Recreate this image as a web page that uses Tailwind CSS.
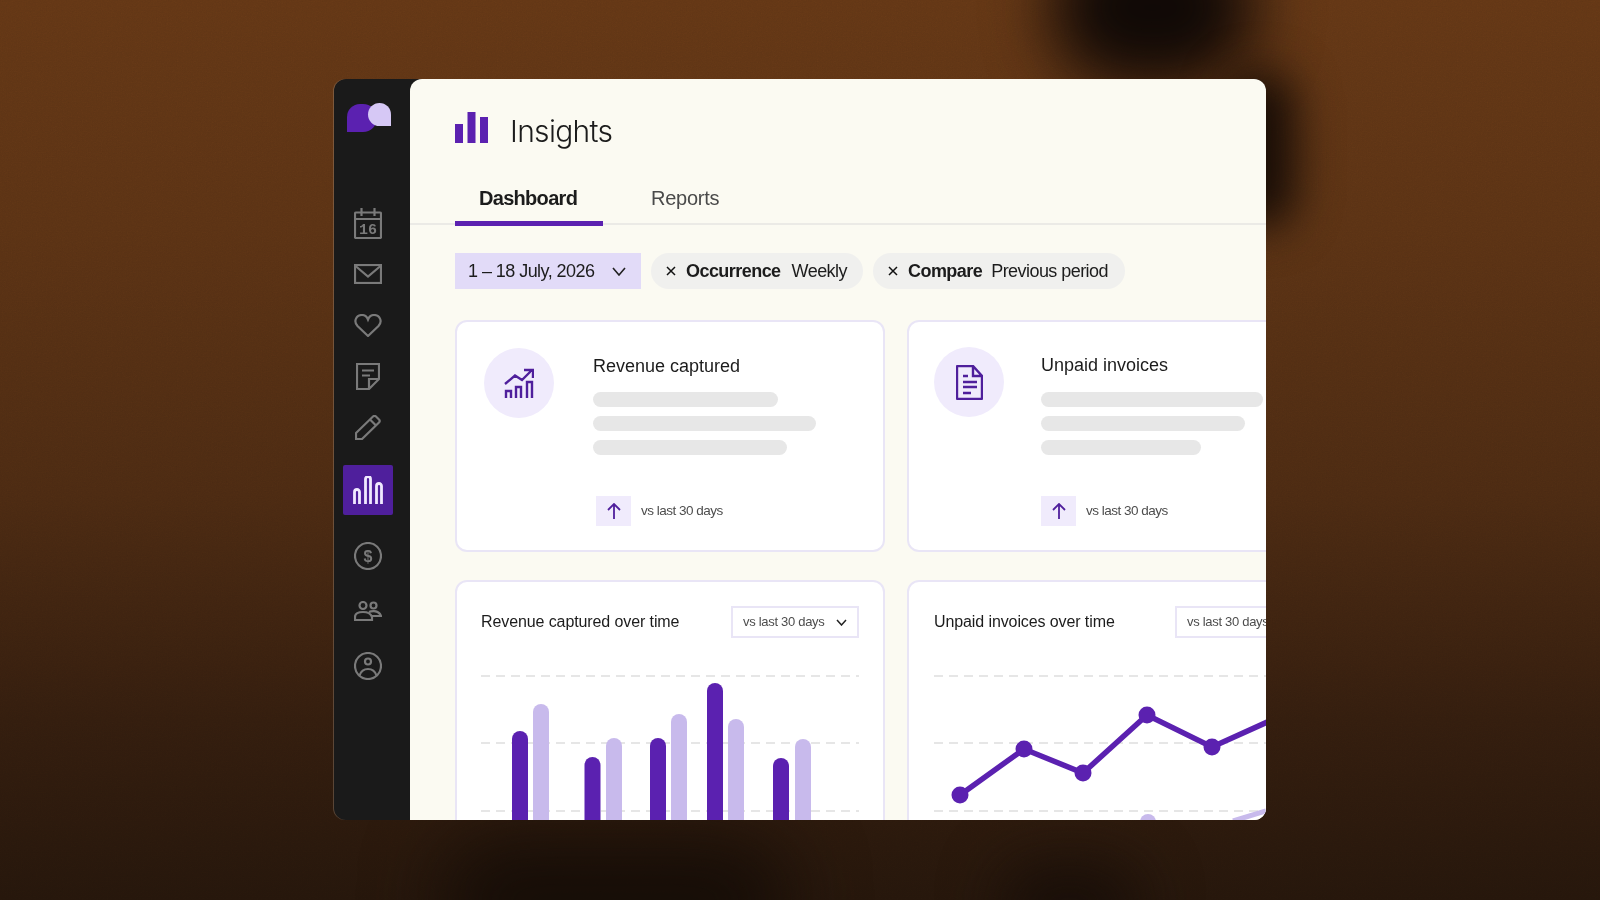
<!DOCTYPE html>
<html lang="en">
<head>
  <meta charset="UTF-8" />
  <title>Insights</title>
  <script src="https://cdn.jsdelivr.net/npm/@tailwindcss/browser@4"></script>
</head>
<body class="font-['Liberation_Sans',Arial,sans-serif] bg-[#5e3716] overflow-hidden">
<div class="relative w-[1600px] h-[900px] overflow-hidden pl-[334px] pt-[79px] bg-[linear-gradient(180deg,#623615_0%,#5a3214_25%,#4b2a12_55%,#331d0e_80%,#25160b_100%)]">

  <!-- blurred backdrop shapes -->
  <div class="absolute left-[1050px] top-[-70px] w-[205px] h-[155px] rounded-full bg-[#0f0805] blur-[32px]"></div>
  <div class="absolute left-[1225px] top-[70px] w-[70px] h-[160px] rounded-full bg-[#150b05] blur-[22px]"></div>
  <div class="absolute left-[440px] top-[840px] w-[350px] h-[120px] rounded-full bg-[#150c06] blur-[38px]"></div>
  <div class="absolute left-[1000px] top-[865px] w-[140px] h-[80px] rounded-full bg-[#170d07] blur-[30px]"></div>

  <!-- grain -->
  <svg class="absolute inset-0 opacity-[0.14] mix-blend-overlay" width="1600" height="900">
    <filter id="grain"><feTurbulence type="fractalNoise" baseFrequency="0.8" numOctaves="2"/><feColorMatrix type="saturate" values="0"/></filter>
    <rect width="1600" height="900" filter="url(#grain)"/>
  </svg>

  <div class="relative flex w-[932px] h-[741px] rounded-[12px] overflow-hidden bg-[#1a1a1a] shadow-[-1px_0_0_0_rgba(190,170,150,0.3)]">

    <!-- sidebar -->
    <aside class="w-[76px] shrink-0 flex flex-col items-center pr-[8px] text-[#7a7a7a]">
      <svg class="mt-[24px] ml-[1px] w-[44px] h-[30px] shrink-0" viewBox="0 0 44 30">
        <path d="M0 29V14A13 13 0 0 1 13 1H16A14 14 0 0 1 30 15A14 14 0 0 1 16 29Z" fill="#5b21b0"/>
        <path d="M21 11.500A11.500 11.500 0 0 1 44 11.500V23H32.500A11.500 11.500 0 0 1 21 11.500Z" fill="#d6c8f5"/>
      </svg>

      <svg class="mt-[75px] w-[28px] h-[31px] shrink-0" viewBox="0 0 28 31" fill="none" stroke="currentColor" stroke-width="2.200">
        <rect x="1" y="4.500" width="26" height="25.500" rx="1"/><path d="M1 11H27M7.500 0V8M20.500 0V8"/>
        <text x="14" y="26" text-anchor="middle" font-family="Liberation Mono" font-weight="700" font-size="15" fill="currentColor" stroke="none">16</text>
      </svg>
      <svg class="mt-[25px] w-[28px] h-[20px] shrink-0" viewBox="0 0 28 20" fill="none" stroke="currentColor" stroke-width="2.200">
        <rect x="1" y="1" width="26" height="18"/><path d="M1.500 2L14 12.500L26.500 2"/>
      </svg>
      <svg class="mt-[30px] w-[28px] h-[23px] shrink-0" viewBox="0 0 28 23" fill="none" stroke="currentColor" stroke-width="2.200">
        <path d="M14 22L3.500 12C-1 7 2.500 1 8 1C11 1 13 3 14 5.500C15 3 17 1 20 1C25.500 1 29 7 24.500 12Z"/>
      </svg>
      <svg class="mt-[26px] w-[24px] h-[27px] shrink-0" viewBox="0 0 24 27" fill="none" stroke="currentColor" stroke-width="2.200">
        <path d="M1 26V1H23V16L13 26ZM13 26V16H23M6 7.500H18M6 12.500H14"/>
      </svg>
      <svg class="mt-[25px] w-[26px] h-[25px] shrink-0" viewBox="0 0 26 25" fill="none" stroke="currentColor" stroke-width="2.200">
        <path d="M1 24V18L18 1.500C19 0.700 20 0.700 21 1.500L24 4.500C25 5.500 25 6.500 24 7.500L7 24ZM15 4.500L21 10.500"/>
      </svg>
      <div class="mt-[25px] w-[50px] h-[50px] shrink-0 rounded-[2px] bg-[#4f1f9c] flex items-center justify-center">
        <svg class="w-[30px] h-[28px]" viewBox="0 0 30 28" fill="none" stroke="#f0e9ff" stroke-width="2.800">
          <path d="M1.500 28V16A2.500 2.500 0 0 1 6.500 16V28M12.500 28V3A2.500 2.500 0 0 1 17.500 3V28M23.500 28V10A2.500 2.500 0 0 1 28.500 10V28"/>
        </svg>
      </div>
      <svg class="mt-[27px] w-[28px] h-[28px] shrink-0" viewBox="0 0 28 28" fill="none" stroke="currentColor" stroke-width="2.200">
        <circle cx="14" cy="14" r="13"/>
        <text x="14" y="20" text-anchor="middle" font-family="Liberation Sans" font-weight="700" font-size="16" fill="currentColor" stroke="none">$</text>
      </svg>
      <svg class="mt-[31px] w-[28px] h-[20px] shrink-0" viewBox="0 0 28 20" fill="none" stroke="currentColor" stroke-width="2.200">
        <circle cx="9" cy="4.500" r="3.500"/><circle cx="19.500" cy="4.500" r="3"/>
        <path d="M1 19V16C1 13 4 11 9 11C14 11 17 13 18 16V19ZM15 11C17 10 23 9 26 13L27 15H18"/>
      </svg>
      <svg class="mt-[31px] w-[28px] h-[28px] shrink-0" viewBox="0 0 28 28" fill="none" stroke="currentColor" stroke-width="2.200">
        <circle cx="14" cy="14" r="13"/><circle cx="14" cy="9.500" r="3"/>
        <path d="M5.500 23.500C7 19 10 17 14 17C18 17 21 19 22.500 23.500"/>
      </svg>
    </aside>

    <!-- main panel -->
    <main class="flex-1 min-w-0 bg-[#fbfaf2] rounded-tl-[12px] overflow-hidden text-[#1c1c1c]">
      <header class="flex items-center gap-[22px] pl-[45px] h-[100px]">
        <svg class="w-[33px] h-[31px] shrink-0 mb-[3px]" viewBox="0 0 33 31" fill="#5b21b0">
          <rect x="0" y="12" width="8" height="19"/><rect x="12.500" y="0" width="8" height="31"/><rect x="25" y="5" width="8" height="26"/>
        </svg>
        <h1 class="font-['Inter',sans-serif] font-light text-[30px] tracking-[-0.7px] mt-[4px]">Insights</h1>
      </header>

      <nav class="flex pl-[45px] h-[46px] border-b-2 border-[#ebeae6]">
        <div class="w-[148px] h-[47px] shrink-0 pl-[24px] pt-[4px] border-b-[5px] border-[#5b21b0] text-[20px] font-bold tracking-[-0.7px]">Dashboard</div>
        <div class="ml-[48px] pt-[4px] text-[20px] text-[#4a4a4a] tracking-[-0.25px]">Reports</div>
      </nav>

      <div class="flex items-center gap-[10px] pl-[45px] mt-[28px] text-[18px] tracking-[-0.55px]">
        <div class="flex items-center w-[186px] h-[36px] pl-[13px] bg-[#e2dbf8]">
          1 – 18 July, 2026
          <svg class="ml-[18px] w-[14px] h-[9px]" viewBox="0 0 14 9" fill="none" stroke="#222" stroke-width="1.600"><path d="M1 1L7 8L13 1"/></svg>
        </div>
        <div class="flex items-center w-[212px] h-[36px] pl-[15px] rounded-full bg-[#f0f0ee]">
          <svg class="w-[10px] h-[10px] mr-[10px]" viewBox="0 0 10 10" stroke="#111" stroke-width="1.500"><path d="M1 1L9 9M9 1L1 9"/></svg>
          <b>Occurrence</b><span class="ml-[11px]">Weekly</span>
        </div>
        <div class="flex items-center w-[252px] h-[36px] pl-[15px] rounded-full bg-[#f0f0ee]">
          <svg class="w-[10px] h-[10px] mr-[10px]" viewBox="0 0 10 10" stroke="#111" stroke-width="1.500"><path d="M1 1L9 9M9 1L1 9"/></svg>
          <b>Compare</b><span class="ml-[9px]">Previous period</span>
        </div>
      </div>

      <div class="grid grid-cols-[430px_430px] gap-x-[22px] gap-y-[28px] pl-[45px] mt-[31px]">
        <!-- stat cards -->
        <section class="h-[232px] rounded-[12px] border-2 border-[#e9e5f6] bg-white flex pl-[27px] pt-[26px]">
          <div class="w-[70px] h-[70px] rounded-full bg-[#f0ebfc] flex items-center justify-center shrink-0">
            <svg class="w-[30px] h-[30px]" viewBox="0 0 30 30" fill="none" stroke="#4f1f9c" stroke-width="2.400">
              <path d="M1 16L11 7.500L18 12L28 2M20 2H29V10M2 30V23H7V30M12 30V19H17V30M23 30V14H28V30"/>
            </svg>
          </div>
          <div class="ml-[39px] flex-1">
            <h2 class="text-[18px] leading-[24px] mt-[6px]">Revenue captured</h2>
            <div class="mt-[14px] h-[15px] w-[185px] rounded-full bg-[#e7e7e7]"></div>
            <div class="mt-[9px] h-[15px] w-[223px] rounded-full bg-[#e7e7e7]"></div>
            <div class="mt-[9px] h-[15px] w-[194px] rounded-full bg-[#e7e7e7]"></div>
            <div class="mt-[41px] ml-[3px] flex items-center">
              <div class="w-[35px] h-[30px] bg-[#f0ebfc] flex items-center justify-center">
                <svg class="w-[14px] h-[16px]" viewBox="0 0 14 16" fill="none" stroke="#4f1f9c" stroke-width="1.800"><path d="M7 16V1M1 7L7 1L13 7"/></svg>
              </div>
              <span class="ml-[10px] pt-[1px] text-[13.5px] text-[#4d4d4d] tracking-[-0.5px]">vs last 30 days</span>
            </div>
          </div>
        </section>

        <section class="h-[232px] rounded-[12px] border-2 border-[#e9e5f6] bg-white flex pl-[25px] pt-[25px]">
          <div class="w-[70px] h-[70px] rounded-full bg-[#f0ebfc] flex items-center justify-center shrink-0">
            <svg class="w-[27px] h-[35px]" viewBox="0 0 27 35" fill="none" stroke="#4f1f9c" stroke-width="2.400">
              <path d="M2 1H17L26 11V33A1 1 0 0 1 25 34H2A1 1 0 0 1 1 33V2A1 1 0 0 1 2 1ZM17 1V11H26M7 11H12M7 17H21M7 22H21M7 28H15"/>
            </svg>
          </div>
          <div class="ml-[37px] flex-1">
            <h2 class="text-[18px] leading-[24px] mt-[6px]">Unpaid invoices</h2>
            <div class="mt-[15px] h-[15px] w-[222px] rounded-full bg-[#e7e7e7]"></div>
            <div class="mt-[9px] h-[15px] w-[204px] rounded-full bg-[#e7e7e7]"></div>
            <div class="mt-[9px] h-[15px] w-[160px] rounded-full bg-[#e7e7e7]"></div>
            <div class="mt-[41px] flex items-center">
              <div class="w-[35px] h-[30px] bg-[#f0ebfc] flex items-center justify-center">
                <svg class="w-[14px] h-[16px]" viewBox="0 0 14 16" fill="none" stroke="#4f1f9c" stroke-width="1.800"><path d="M7 16V1M1 7L7 1L13 7"/></svg>
              </div>
              <span class="ml-[10px] pt-[1px] text-[13.5px] text-[#4d4d4d] tracking-[-0.5px]">vs last 30 days</span>
            </div>
          </div>
        </section>

        <!-- chart cards -->
        <section class="h-[300px] rounded-[12px] border-2 border-[#e9e5f6] bg-white px-[24px] pt-[24px]">
          <div class="flex items-center justify-between">
            <h3 class="text-[16px] tracking-[-0.1px]">Revenue captured over time</h3>
            <div class="flex items-center w-[128px] h-[32px] pl-[10px] border-2 border-[#e9e5f6] text-[13px] text-[#4d4d4d] tracking-[-0.3px]">
              vs last 30 days
              <svg class="ml-[11px] w-[11px] h-[7px]" viewBox="0 0 11 7" fill="none" stroke="#222" stroke-width="1.500"><path d="M1 1L5.500 6L10 1"/></svg>
            </div>
          </div>
          <svg class="mt-[36px]" width="378" height="180" viewBox="0 0 378 180">
            <path d="M0 2H378M0 69H378M0 137H378" stroke="#dedede" stroke-width="1.500" stroke-dasharray="9 6" fill="none"/>
            <rect x="31" y="57" width="16" height="140" rx="8" fill="#5b21b0"/>
            <rect x="52" y="30" width="16" height="160" rx="8" fill="#c8baec"/>
            <rect x="103.500" y="83" width="16" height="110" rx="8" fill="#5b21b0"/>
            <rect x="125" y="64" width="16" height="130" rx="8" fill="#c8baec"/>
            <rect x="169" y="64" width="16" height="130" rx="8" fill="#5b21b0"/>
            <rect x="190" y="40" width="16" height="150" rx="8" fill="#c8baec"/>
            <rect x="226" y="9" width="16" height="180" rx="8" fill="#5b21b0"/>
            <rect x="247" y="45" width="16" height="150" rx="8" fill="#c8baec"/>
            <rect x="292" y="84" width="16" height="110" rx="8" fill="#5b21b0"/>
            <rect x="314" y="65" width="16" height="130" rx="8" fill="#c8baec"/>
          </svg>
        </section>

        <section class="h-[300px] rounded-[12px] border-2 border-[#e9e5f6] bg-white pl-[25px] pt-[24px]">
          <div class="flex items-center">
            <h3 class="text-[16px] w-[241px] whitespace-nowrap tracking-[-0.1px]">Unpaid invoices over time</h3>
            <div class="shrink-0 flex items-center w-[128px] h-[32px] pl-[10px] border-2 border-[#e9e5f6] text-[13px] text-[#4d4d4d] tracking-[-0.3px]">
              vs last 30 days
            </div>
          </div>
          <svg class="mt-[36px]" width="400" height="180" viewBox="0 0 400 180">
            <path d="M0 2H400M0 69H400M0 137H400" stroke="#dedede" stroke-width="1.500" stroke-dasharray="9 6" fill="none"/>
            <circle cx="214" cy="148" r="8" fill="#c8baec"/>
            <path d="M299 147L332 137" stroke="#c8baec" stroke-width="5" fill="none"/>
            <path d="M26 121L90 75L149 99L213 41L278 73L340 45" stroke="#5b21b0" stroke-width="5.500" fill="none"/>
            <g fill="#5b21b0">
              <circle cx="26" cy="121" r="8.500"/><circle cx="90" cy="75" r="8.500"/><circle cx="149" cy="99" r="8.500"/><circle cx="213" cy="41" r="8.500"/><circle cx="278" cy="73" r="8.500"/>
            </g>
          </svg>
        </section>
      </div>
    </main>
  </div>
</div>
</body>
</html>
